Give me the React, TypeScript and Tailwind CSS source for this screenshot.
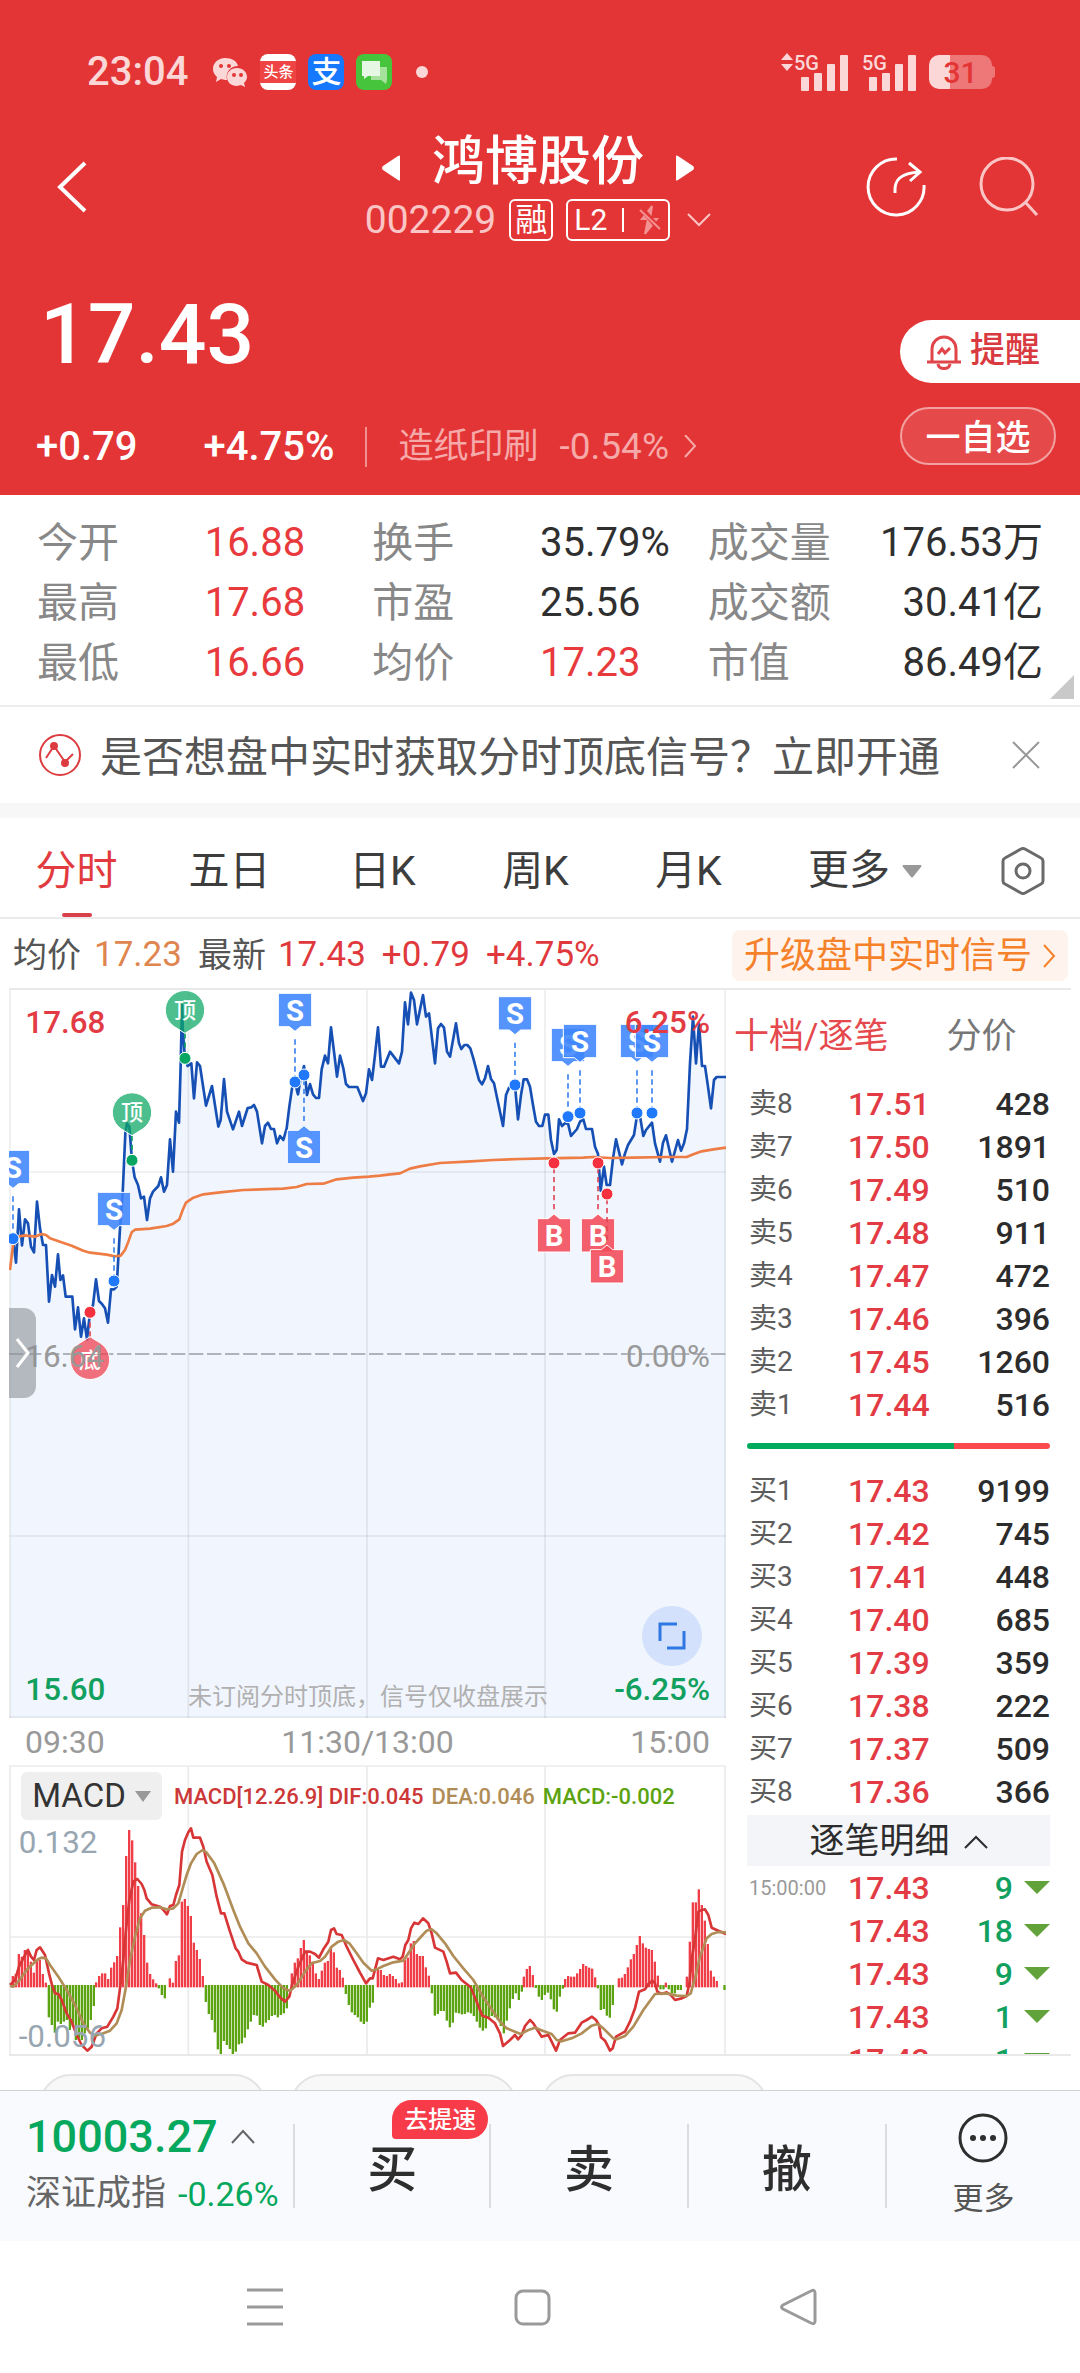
import type { ReactNode } from "react";
import clsx from "clsx";

type Level = { name: string; price: string; volume: string };

const STATS = [
  { label: "今开", value: "16.88", up: true },
  { label: "换手", value: "35.79%" },
  { label: "成交量", value: "176.53万", end: true },
  { label: "最高", value: "17.68", up: true },
  { label: "市盈", value: "25.56" },
  { label: "成交额", value: "30.41亿", end: true },
  { label: "最低", value: "16.66", up: true },
  { label: "均价", value: "17.23", up: true },
  { label: "市值", value: "86.49亿", end: true },
];

const PERIODS = ["分时", "五日", "日K", "周K", "月K"];

const SELLS: Level[] = [
  { name: "卖8", price: "17.51", volume: "428" },
  { name: "卖7", price: "17.50", volume: "1891" },
  { name: "卖6", price: "17.49", volume: "510" },
  { name: "卖5", price: "17.48", volume: "911" },
  { name: "卖4", price: "17.47", volume: "472" },
  { name: "卖3", price: "17.46", volume: "396" },
  { name: "卖2", price: "17.45", volume: "1260" },
  { name: "卖1", price: "17.44", volume: "516" },
];

const BUYS: Level[] = [
  { name: "买1", price: "17.43", volume: "9199" },
  { name: "买2", price: "17.42", volume: "745" },
  { name: "买3", price: "17.41", volume: "448" },
  { name: "买4", price: "17.40", volume: "685" },
  { name: "买5", price: "17.39", volume: "359" },
  { name: "买6", price: "17.38", volume: "222" },
  { name: "买7", price: "17.37", volume: "509" },
  { name: "买8", price: "17.36", volume: "366" },
];

const TRADES = [
  { time: "15:00:00", price: "17.43", volume: "9" },
  { time: "", price: "17.43", volume: "18" },
  { time: "", price: "17.43", volume: "9" },
  { time: "", price: "17.43", volume: "1" },
  { time: "", price: "17.43", volume: "1" },
];

// chart canvases are drawn at 3 units per css pixel
const PRICE_LINE =
  "30,770 39,776 48,848 57,688 66,796 75,718 84,730 93,800 102,817 111,665 120,745 129,795 138,795 147,965 156,885 165,920 174,823 181,900 189,886 197,950 217,950 225,1048 234,982 243,1070 252,1015 261,1078 270,997 279,975 288,898 297,963 306,972 315,985 324,1028 333,928 342,928 350,920 360,745 368,640 376,460 381,430 388,440 396,541 404,592 414,615 423,655 432,650 441,720 450,655 459,635 475,618 483,592 492,635 501,615 510,478 519,575 528,395 537,428 542,255 546,75 549,160 555,235 563,258 574,250 582,355 591,247 600,258 618,377 636,318 655,440 662,420 672,297 681,395 699,448 717,395 726,438 743,384 754,382 762,375 771,395 786,490 795,438 804,428 813,447 822,447 831,490 840,468 850,480 860,445 868,380 876,325 884,306 894,343 903,290 912,258 921,345 930,312 939,343 948,354 957,354 965,268 975,227 984,250 993,142 1002,215 1011,290 1020,227 1030,265 1038,312 1047,321 1072,321 1089,363 1098,340 1107,268 1116,300 1125,225 1134,142 1143,260 1152,260 1170,215 1197,250 1206,215 1215,67 1224,133 1233,38 1242,60 1251,133 1269,45 1278,110 1287,100 1305,250 1314,145 1323,132 1332,143 1341,215 1350,230 1368,130 1377,190 1384,207 1393,195 1402,195 1411,205 1420,235 1437,300 1446,313 1455,295 1464,258 1473,297 1482,310 1509,438 1518,345 1527,323 1545,316 1554,418 1563,345 1571,298 1581,298 1590,320 1599,375 1608,425 1617,438 1627,438 1635,404 1645,404 1653,480 1662,522 1670,510 1677,418 1686,438 1695,430 1704,430 1713,468 1731,447 1740,425 1750,418 1758,447 1776,447 1785,500 1794,522 1802,632 1812,560 1820,615 1830,615 1839,535 1848,478 1866,553 1875,520 1884,495 1902,465 1912,400 1921,415 1930,468 1938,450 1956,428 1965,490 1980,545 1989,488 1998,466 2016,545 2034,480 2043,512 2052,490 2061,447 2070,250 2079,110 2088,250 2097,130 2106,258 2115,258 2124,320 2133,385 2142,300 2150,291 2178,291";

const AVERAGE_LINE =
  "30,870 39,795 55,770 75,766 105,770 125,762 138,765 150,775 180,785 215,797 250,812 270,818 320,824 345,829 362,827 375,810 385,785 395,757 405,749 450,746 500,738 520,731 538,718 548,690 558,668 580,653 610,643 660,637 730,630 850,626 890,621 920,612 970,611 1010,598 1060,593 1107,590 1140,587 1170,583 1200,580 1230,566 1260,559 1320,549 1400,545 1480,540 1560,537 1640,535 1750,533 1780,531 1830,534 1900,533 2000,531 2060,531 2080,523 2105,514 2140,508 2178,503";

const DIF_LINE =
  "30,1215 45,1200 57,1160 75,1125 84,1110 93,1130 102,1140 110,1110 120,1102 135,1125 147,1180 156,1215 165,1240 175,1242 185,1260 200,1300 215,1325 230,1365 245,1395 262,1412 275,1400 290,1360 305,1345 322,1340 340,1310 352,1285 362,1210 370,1140 378,1050 388,960 400,905 412,897 425,912 433,930 440,955 455,973 480,980 492,992 501,1003 510,978 520,975 528,945 538,915 546,815 555,780 565,757 573,745 580,773 600,773 610,800 620,845 637,885 650,950 663,1000 673,1000 690,1055 707,1105 715,1115 725,1138 740,1148 770,1155 785,1205 805,1215 825,1232 840,1252 855,1265 868,1250 876,1215 895,1160 915,1115 930,1115 945,1122 957,1133 970,1108 985,1085 993,1050 1002,1045 1010,1062 1025,1065 1040,1100 1060,1140 1080,1178 1098,1210 1110,1195 1118,1195 1134,1135 1150,1140 1180,1130 1200,1138 1208,1130 1216,1095 1225,1080 1233,1045 1243,1028 1255,1032 1269,1015 1285,1030 1295,1060 1305,1103 1330,1115 1340,1145 1350,1180 1368,1178 1385,1200 1412,1222 1428,1260 1447,1307 1465,1313 1485,1330 1500,1360 1509,1398 1530,1380 1545,1365 1554,1378 1565,1365 1575,1338 1590,1320 1600,1330 1612,1350 1625,1370 1645,1365 1655,1385 1668,1412 1680,1380 1705,1360 1725,1358 1745,1328 1760,1320 1776,1310 1788,1320 1797,1335 1803,1372 1815,1382 1830,1412 1838,1405 1848,1370 1875,1355 1890,1325 1905,1285 1917,1235 1935,1228 1945,1212 1957,1202 1965,1210 1972,1235 1985,1242 2000,1237 2012,1245 2025,1260 2045,1255 2060,1248 2068,1210 2076,1130 2085,1080 2095,995 2105,990 2115,988 2125,1005 2135,1043 2155,1052 2178,1062";

const DEA_LINE =
  "30,1218 40,1220 55,1205 80,1170 95,1155 115,1137 125,1133 138,1135 150,1155 175,1190 200,1230 225,1275 250,1330 270,1358 285,1367 310,1360 330,1352 350,1330 365,1290 378,1220 390,1140 405,1070 420,1015 435,992 455,983 480,982 500,988 520,985 535,970 548,925 560,885 573,850 590,822 608,810 620,818 643,850 670,910 700,990 720,1040 745,1090 770,1120 795,1160 825,1198 850,1225 870,1233 890,1215 915,1175 935,1150 960,1143 975,1130 995,1100 1015,1085 1032,1080 1048,1090 1070,1120 1090,1148 1115,1172 1130,1168 1150,1158 1180,1147 1210,1142 1225,1120 1245,1090 1265,1068 1280,1052 1295,1048 1310,1060 1335,1090 1360,1128 1390,1165 1420,1200 1450,1252 1480,1295 1500,1325 1520,1345 1545,1355 1562,1362 1585,1350 1605,1343 1630,1353 1655,1362 1670,1380 1685,1384 1715,1375 1745,1360 1775,1337 1793,1332 1810,1345 1840,1375 1850,1378 1875,1368 1900,1340 1930,1290 1965,1242 2000,1240 2030,1247 2060,1248 2072,1240 2085,1195 2100,1130 2120,1075 2135,1062 2155,1056 2178,1057";

// runs of histogram bars: x of the first bar, then the tip of each bar
const MACD_RUNS: { x: number; tips: number[] }[] = [
  { x: 39, tips: [1188, 1182, 1122, 1130, 1110, 1108, 1145, 1178, 1140, 1140, 1182, 1208] },
  { x: 147, tips: [1312, 1335, 1358, 1325, 1332, 1325, 1320, 1350, 1340, 1380, 1375, 1380, 1360, 1345, 1320, 1278] },
  { x: 289, tips: [1207, 1188, 1180, 1180, 1197, 1163, 1147, 1128, 1042, 975, 828, 750, 781, 847, 918, 1000, 1065, 1148, 1182, 1198, 1210] },
  { x: 477, tips: [1225, 1245, 1255] },
  { x: 510, tips: [1195, 1208, 1143, 1126, 965, 957, 978, 1008, 1088, 1110, 1137, 1188] },
  { x: 618, tips: [1266, 1302, 1320, 1357, 1408, 1422, 1383, 1395, 1407, 1422, 1415, 1393, 1390, 1373, 1348, 1325, 1305, 1307, 1335, 1340, 1328, 1320, 1308, 1305, 1312, 1305, 1300, 1285] },
  { x: 876, tips: [1180, 1148, 1135, 1104, 1080, 1115, 1126, 1145, 1180, 1197, 1172, 1148, 1143, 1100, 1117, 1163, 1170, 1193] },
  { x: 1038, tips: [1242, 1275, 1297, 1305, 1312, 1325, 1332, 1325, 1283, 1268] },
  { x: 1134, tips: [1165, 1170, 1185, 1188, 1182, 1188, 1197, 1210, 1207, 1140, 1133, 1090, 1083, 1122, 1128, 1128, 1162, 1187] },
  { x: 1296, tips: [1240, 1307, 1302, 1293, 1293, 1322, 1342, 1328, 1298, 1300, 1303, 1302, 1297, 1300, 1308, 1325, 1343, 1352, 1345, 1312, 1308, 1312, 1320, 1338, 1360, 1322, 1285, 1257, 1240, 1260, 1235] },
  { x: 1572, tips: [1190, 1167, 1158, 1185] },
  { x: 1608, tips: [1224, 1250, 1260, 1245, 1238, 1258, 1288, 1295, 1250, 1226] },
  { x: 1696, tips: [1197, 1188, 1190, 1190, 1180, 1167, 1152, 1158, 1163, 1166, 1192] },
  { x: 1794, tips: [1225, 1290, 1287, 1307, 1313, 1275] },
  { x: 1857, tips: [1195, 1193, 1182, 1162, 1138, 1122, 1095, 1068, 1090, 1103, 1107, 1110, 1145, 1187] },
  { x: 1982, tips: [1228, 1228] },
  { x: 1998, tips: [1208] },
  { x: 2007, tips: [1228, 1240, 1240, 1230, 1230] },
  { x: 2061, tips: [1190, 1085, 967, 967, 928, 975, 1022, 1092, 1172, 1190, 1203] },
  { x: 2174, tips: [1230] },
];

// box = top edge of the flag, dot = point on the price line
const FLAGS = [
  { kind: "S", x: 39, box: 511, dot: 776 },
  { kind: "S", x: 342, box: 637, dot: 903 },
  { kind: "S", x: 885, box: 40, dot: 306 },
  { kind: "S", x: 912, box: 451, dot: 285 },
  { kind: "S", x: 1545, box: 50, dot: 315 },
  { kind: "S", x: 1704, box: 145, dot: 410 },
  { kind: "S", x: 1740, box: 133, dot: 399 },
  { kind: "S", x: 1911, box: 133, dot: 399 },
  { kind: "S", x: 1956, box: 133, dot: 399 },
  { kind: "B", x: 1662, box: 716, dot: 549 },
  { kind: "B", x: 1794, box: 716, dot: 549 },
  { kind: "B", x: 1821, box: 809, dot: 642 },
];

function Flag({ kind, x, box, dot }: { kind: string; x: number; box: number; dot: number }) {
  const sell = kind === "S";
  const above = box < dot;
  const line = sell ? "#3f85ee" : "#e0485a";
  const near = above ? box + 100 : box;
  const tip = above ? near + 14 : near - 14;
  return (
    <g>
      <line x1={x} x2={x} y1={above ? tip + 24 : tip - 14} y2={above ? dot - 14 : dot + 14} stroke={line} strokeWidth="5" strokeDasharray="16 11" />
      <circle cx={x} cy={dot} r="18" fill={sell ? "#2079fb" : "#f5313f"} stroke="#fff" strokeWidth="3" />
      <g fill={sell ? "#3f85fd" : "#f24a58"} fillOpacity="0.88" stroke="#fff" strokeWidth="3">
        {above ? (
          <path d={`M${x - 50} ${box}h100v100h-33L${x} ${tip}L${x - 17} ${near}h-33z`} />
        ) : (
          <path d={`M${x - 50} ${box}h33L${x} ${tip}L${x + 17} ${near}h33v100h-100z`} />
        )}
      </g>
      <text x={x} y={box + 82} textAnchor="middle" fontSize="88" fontWeight="700" fill="#fff">
        {kind}
      </text>
    </g>
  );
}

function Pin({ x, y, dot, text }: { x: number; y: number; dot: number; text: string }) {
  const top = y < dot;
  const tip = top ? y + 70 : y - 70;
  const edge = top ? y + 50 : y - 50;
  return (
    <g>
      <line x1={x} x2={x} y1={tip} y2={dot} stroke={top ? "#0d9c62" : "#e0485a"} strokeWidth="5" strokeDasharray="16 11" />
      <circle cx={x} cy={dot} r="18" fill={top ? "#06a561" : "#f5313f"} stroke="#fff" strokeWidth="3" />
      <path
        d={`M${x - 32} ${edge}A59 59 0 1 ${top ? 1 : 0} ${x + 32} ${edge}L${x} ${tip}z`}
        fill={top ? "#0fa866" : "#f04050"}
        fillOpacity="0.74"
        stroke="#fff"
        strokeWidth="3"
      />
      <text x={x} y={y + 24} textAnchor="middle" fontSize="66" fontWeight="500" fill="#fff">
        {text}
      </text>
    </g>
  );
}

function Chevron({ d, className }: { d: string; className: string }) {
  return (
    <svg viewBox="0 0 24 24" fill="none" stroke="currentColor" strokeWidth="2" className={className}>
      <path d={d} />
    </svg>
  );
}

function Signal({ arrows }: { arrows?: boolean }) {
  return (
    <svg viewBox="0 0 68 38" className="h-[38px] w-[68px] overflow-visible" fill="#fbd7d7">
      {arrows && <path d="M0 7L6 0L12 7zM0 11L6 18L12 11z" />}
      <text x="13" y="17" fontSize="20" fontWeight="500">
        5G
      </text>
      <rect x="20" y="24" width="8" height="14" rx="1" />
      <rect x="33" y="20" width="8" height="18" rx="1" />
      <rect x="46" y="11" width="8" height="27" rx="1" />
      <rect x="59" y="2" width="8" height="36" rx="1" />
    </svg>
  );
}

function StatusBar() {
  return (
    <div className="flex h-9 items-center justify-between pl-[87px] pr-[85px] text-[#fbd7d7]">
      <div className="flex items-center gap-3">
        <span className="mr-3 text-[40px] font-medium leading-9">23:04</span>
        <svg viewBox="0 0 36 36" className="size-9" fill="#fbd7d7">
          <path d="M13 4C6 4 1 9 1 15c0 4 2 6 4 8l-1 5 5-3 4 1h2c-2-8 4-14 11-14C25 7 20 4 13 4z" />
          <path d="M25 14c-6 0-10 4-10 9s4 9 10 9l4-1 4 2-1-4c2-2 3-4 3-6 0-5-4-9-10-9z" />
          <g fill="#e33535">
            <circle cx="9" cy="12" r="2" />
            <circle cx="17" cy="12" r="2" />
            <circle cx="22" cy="21" r="2" />
            <circle cx="29" cy="21" r="2" />
          </g>
        </svg>
        <span className="flex size-9 items-center overflow-hidden rounded-lg bg-white">
          <span className="w-full bg-[#ef4444] text-center text-[15px] font-medium leading-[22px] text-white">头条</span>
        </span>
        <span className="flex size-9 items-center justify-center rounded-lg bg-[#1677ff] text-[30px] font-medium leading-9 text-white">支</span>
        <svg viewBox="0 0 36 36" className="size-9">
          <rect width="36" height="36" rx="8" fill="#46c53c" />
          <path d="M15 13h16v13l-1 4-5-4H15z" fill="#a5e39c" />
          <path d="M6 7h18v15H12l-4 3v-3H6z" fill="#e6f8e4" />
        </svg>
        <span className="ml-3 size-3 rounded-full bg-[#fbd7d7]" />
      </div>
      <div className="flex items-center">
        <Signal arrows />
        <Signal />
        <span className="ml-3 flex h-[34px] w-[63px] items-center justify-center rounded-[10px] bg-linear-to-r from-[#fbd7d7] from-33% to-[#ee7777] to-33% text-[30px] font-medium text-[#e33535]">
          31
        </span>
        <span className="h-3 w-[3px] rounded-r bg-[#ee7777]" />
      </div>
    </div>
  );
}

function TitleBar() {
  return (
    <div className="mt-11 grid grid-cols-[1fr_auto_1fr] items-center pl-9 pr-10">
      <button aria-label="返回" className="ml-4 w-10">
        <svg viewBox="0 0 40 56" className="h-14 w-10" fill="none" stroke="#fff" strokeWidth="4">
          <path d="M33 3L8 27L33 51" />
        </svg>
      </button>
      <div className="flex flex-col items-center gap-[9px]">
        <div className="flex h-14 items-center gap-[31px]">
          <button aria-label="上一只">
            <svg viewBox="0 0 20 28" className="mt-3 h-7 w-5" fill="#fff">
              <path d="M19 2v24q0 1-2 0L2 16q-2-2 0-4L17 2q2-1 2 0z" />
            </svg>
          </button>
          <h1 className="text-[53px] font-medium leading-[58px]">鸿博股份</h1>
          <button aria-label="下一只">
            <svg viewBox="0 0 20 28" className="mt-3 h-7 w-5" fill="#fff">
              <path d="M1 2v24q0 1 2 0L18 16q2-2 0-4L3 2Q1 1 1 2z" />
            </svg>
          </button>
        </div>
        <div className="flex h-[42px] items-center gap-[13px]">
          <span className="text-[39px] leading-[42px] text-[#fbc5c5]">002229</span>
          <span className="flex h-[42px] w-11 items-center justify-center rounded-[6px] border-2 text-[32px] leading-8">融</span>
          <span className="flex h-[42px] w-[104px] items-center justify-between rounded-[6px] border-2 px-[6px] text-[30px] leading-8">
            L2
            <span className="h-6 w-[2px] bg-white" />
            <svg viewBox="0 0 24 30" className="h-[30px] w-6">
              <path d="M14 1L4 14h6L7 29l12-15h-7z" fill="#f29292" stroke="#f29292" strokeWidth="2" />
              <path d="M3 3l20 23" stroke="#e33536" strokeWidth="5" />
              <path d="M2 5l20 19" stroke="#f29292" strokeWidth="2" />
            </svg>
          </span>
          <Chevron d="M1 6L12 17L23 6" className="ml-1 size-6 text-[#fbc5c5]" />
        </div>
      </div>
      <div className="flex items-center justify-end gap-[50px]">
        <button aria-label="分享">
          <svg viewBox="0 0 60 62" className="h-[62px] w-[60px]" fill="none" stroke="#fff" strokeWidth="3">
            <path d="M31 2A28 28 0 1 0 58 28" />
            <path d="M29 36C28 23 34 16 54 15M43 6L54 15L44 24" />
          </svg>
        </button>
        <button aria-label="搜索">
          <svg viewBox="0 0 64 62" className="h-[62px] w-16" fill="none" stroke="#fbc5c5" strokeWidth="3">
            <circle cx="31" cy="27" r="26" />
            <path d="M50 46L61 58" />
          </svg>
        </button>
      </div>
    </div>
  );
}

function PriceHeader() {
  return (
    <div className="flex justify-between">
      <div className="pb-7 pl-9 pt-[52px]">
        <div className="pl-1 text-[84px] font-medium leading-[84px]">17.43</div>
        <div className="mt-[50px] flex h-10 items-center">
          <span className="text-[40px] font-medium">+0.79</span>
          <span className="ml-[66px] text-[40px] font-medium">+4.75%</span>
          <span className="ml-[30px] mr-[32px] h-10 w-[2px] bg-[#f09090]" />
          <a href="#industry" className="flex items-center text-[#f6a9a9]">
            <span className="text-[35px]">造纸印刷</span>
            <span className="ml-[21px] text-[37px]">-0.54%</span>
            <Chevron d="M8 0L18 11L8 22" className="ml-2 size-6" />
          </a>
        </div>
      </div>
      <div className="flex flex-col gap-6 pt-[79px]">
        <button className="flex h-[63px] w-[180px] items-center rounded-l-full bg-white pl-[26px] text-[35px] font-medium text-[#d83a3f]">
          <svg viewBox="0 0 36 36" className="mr-2 size-9" fill="none" stroke="#e0454a" strokeWidth="3">
            <path d="M6 28V15a12 12 0 0 1 24 0v13M1 28h34" />
            <path d="M12 30c1 6 11 6 12 0M12 20l4-5 3 4 5-5" />
          </svg>
          提醒
        </button>
        <button className="h-[58px] w-[156px] rounded-full border-2 border-[#f2a0a0] bg-white/10 pt-1 text-[35px] font-medium leading-none">一自选</button>
      </div>
    </div>
  );
}

function StatsGrid() {
  return (
    <dl className="relative grid grid-cols-3 border-b-2 border-[#ededed] px-[37px] pb-3 pt-[18px] text-[40px] leading-[60px]">
      {STATS.map((stat) => (
        <div key={stat.label} className={clsx("flex", stat.end && "justify-between")}>
          <dt className={clsx("text-[41px] text-[#888]", !stat.end && "w-1/2")}>{stat.label}</dt>
          <dd className={stat.up ? "text-[#e8393c]" : "text-[#2f2f2f]"}>{stat.value}</dd>
        </div>
      ))}
      <svg viewBox="0 0 24 24" className="absolute bottom-[6px] right-[6px] size-6" fill="#c9c9c9">
        <path d="M24 0v24H0z" />
      </svg>
    </dl>
  );
}

function Notice() {
  return (
    <div className="flex h-24 items-center pl-[38px] pr-[38px] text-[42px] text-[#555]">
      <svg viewBox="0 0 44 44" className="mr-[18px] size-11 shrink-0" fill="none" stroke="#dc3c40" strokeWidth="2">
        <circle cx="22" cy="22" r="20" />
        <path d="M8 25L16 13L27 29L35 21" />
        <circle cx="16" cy="13" r="3" fill="#dc3c40" />
        <circle cx="27" cy="30" r="3" fill="#dc3c40" />
      </svg>
      <p className="flex-1 whitespace-nowrap pt-1">是否想盘中实时获取分时顶底信号？立即开通</p>
      <button aria-label="关闭">
        <svg viewBox="0 0 32 32" className="size-8" fill="none" stroke="#999" strokeWidth="2">
          <path d="M3 3l26 26M29 3L3 29" />
        </svg>
      </button>
    </div>
  );
}

function PeriodTabs() {
  return (
    <nav className="grid h-[101px] grid-cols-[repeat(5,153fr)_200fr_115fr] border-b-2 border-[#ebebeb] text-[41px] text-[#3d3d3d]">
      {PERIODS.map((period, index) => (
        <button key={period} className={clsx("flex flex-col items-center", index === 0 && "text-[#e23b3f]")}>
          <span className="h-[95px] leading-[106px]">{period}</span>
          {index === 0 && <span className="h-1 w-[30px] rounded-sm bg-[#d8404a]" />}
        </button>
      ))}
      <button className="flex h-[106px] items-center justify-center gap-3">
        更多
        <svg viewBox="0 0 20 13" className="h-[13px] w-5" fill="#999">
          <path d="M1 0h18q1 1 0 2l-8 10q-1 1-2 0L1 2Q0 1 1 0z" />
        </svg>
      </button>
      <button aria-label="设置" className="flex items-center justify-center">
        <svg viewBox="0 0 44 48" className="h-12 w-11" fill="none" stroke="#6a6a6a" strokeWidth="3">
          <path d="M20 2q2-1 4 0l16 9q2 1 2 3v20q0 2-2 3l-16 9q-2 1-4 0L4 37q-2-1-2-3V14q0-2 2-3z" />
          <circle cx="22" cy="24" r="7" />
        </svg>
      </button>
    </nav>
  );
}

function QuoteLine() {
  return (
    <div className="flex h-[69px] items-center justify-between pl-[13px] pr-3 pt-1 text-[35px]">
      <div className="flex items-center text-[#e0393d]">
        <span className="text-[34px] text-[#555]">均价</span>
        <span className="ml-[13px] text-[#df8650]">17.23</span>
        <span className="ml-4 text-[34px] text-[#555]">最新</span>
        <span className="ml-3">17.43</span>
        <span className="ml-4">+0.79</span>
        <span className="ml-4">+4.75%</span>
      </div>
      <a href="#upgrade" className="flex h-[51px] items-center rounded-lg bg-[#fef4ed] pl-3 pr-2 text-[36px] text-[#f5822b]">
        升级盘中实时信号
        <Chevron d="M8 1L18 12L8 23" className="ml-1 size-6" />
      </a>
    </div>
  );
}

function PriceChart() {
  return (
    <div className="relative">
      <svg viewBox="27 30 2151 2184" className="block w-full">
        <polygon points={`30,2214 ${PRICE_LINE} 2178,2214`} fill="#f0f5fe" />
        <g stroke="#000" strokeOpacity="0.07" strokeWidth="5">
          <path d="M30 30V2214M565 30V2214M1101 30V2214M1635 30V2214M2175 30V2214" />
          <path d="M27 576H2178M27 1668H2178M27 2211H2178" />
        </g>
        <line x1="27" x2="2178" y1="1122" y2="1122" stroke="#999da6" strokeWidth="5" strokeDasharray="43 11" />
        <polyline points={PRICE_LINE} fill="none" stroke="#1650b5" strokeWidth="8" strokeLinejoin="round" />
        <polyline points={AVERAGE_LINE} fill="none" stroke="#ee7c45" strokeWidth="8" strokeLinejoin="round" />
        {FLAGS.map((flag) => (
          <Flag key={flag.x} {...flag} />
        ))}
        <Pin x={555} y={90} dot={235} text="顶" />
        <Pin x={396} y={397} dot={541} text="顶" />
        <Pin x={270} y={1140} dot={997} text="底" />
        <g fontSize="94">
          <g fontWeight="500">
            <text x="76" y="158" fill="#e23b44">17.68</text>
            <text x="2130" y="158" textAnchor="end" fill="#e23b44">6.25%</text>
            <text x="76" y="2160" fill="#12a05f">15.60</text>
            <text x="2130" y="2160" textAnchor="end" fill="#12a05f">-6.25%</text>
          </g>
          <text x="76" y="1162" fill="#999">16.64</text>
          <text x="2130" y="1162" textAnchor="end" fill="#999">0.00%</text>
        </g>
        <text x="564" y="2174" fontSize="72" fill="#b0b0b0">
          未订阅分时顶底，信号仅收盘展示
        </text>
      </svg>
      <button aria-label="展开" className="absolute left-0 top-[318px] flex h-[90px] w-[27px] items-center rounded-r-xl bg-[#8c8f94]/60 pl-1">
        <svg viewBox="0 0 18 32" className="h-8 w-[18px]" fill="none" stroke="#fff" strokeWidth="3">
          <path d="M4 2L15 16L4 30" />
        </svg>
      </button>
      <button aria-label="全屏" className="absolute bottom-[52px] right-6 flex size-[60px] items-center justify-center rounded-full bg-[#d3e1fd]">
        <svg viewBox="0 0 28 28" className="size-7" fill="none" stroke="#2f78e2" strokeWidth="3">
          <path d="M2 19V2h17M26 9v17H9" />
        </svg>
      </button>
    </div>
  );
}

function MacdChart() {
  return (
    <div className="relative">
      <svg viewBox="27 555 2151 867" className="block w-full">
        <path d="M27 558H2178M27 1071H2178M30 558V1422M565 558V1422M1101 558V1422M1635 558V1422M2175 558V1422" stroke="#ebebeb" strokeWidth="5" />
        {MACD_RUNS.map((run) =>
          run.tips.map((tip, i) => {
            const up = tip < 1218;
            return <rect key={run.x + i} x={run.x + i * 9 - 4} y={up ? tip : 1215} width="7" height={up ? 1222 - tip : tip - 1215} fill={up ? "#f03e48" : "#5ba310"} />;
          })
        )}
        <polyline points={DIF_LINE} fill="none" stroke="#d83636" strokeWidth="8" strokeLinejoin="round" />
        <polyline points={DEA_LINE} fill="none" stroke="#b08d57" strokeWidth="8" strokeLinejoin="round" />
        <g fontSize="94" fill="#97a6b1">
          <text x="56" y="818">0.132</text>
          <text x="56" y="1402">-0.056</text>
        </g>
      </svg>
      <div className="absolute inset-x-0 top-[7px] flex items-center whitespace-nowrap pl-3 text-[22px] font-medium">
        <button className="flex h-12 w-[141px] items-center justify-center gap-[9px] rounded-md bg-[#efefef] text-[33px] font-normal text-[#333]">
          MACD
          <svg viewBox="0 0 16 11" className="h-[11px] w-4" fill="#999">
            <path d="M0 0h16L8 11z" />
          </svg>
        </button>
        <span className="ml-3 text-[#cc3838]">MACD[12.26.9] DIF:0.045</span>
        <span className="ml-2 text-[#b08d57]">DEA:0.046</span>
        <span className="ml-2 text-[#5ba310]">MACD:-0.002</span>
      </div>
    </div>
  );
}

function Levels({ levels, caption }: { levels: Level[]; caption: string }) {
  return (
    <table className="w-full table-fixed">
      <caption className="sr-only">{caption}</caption>
      <tbody>
        {levels.map((level) => (
          <tr key={level.name} className="h-[43px] text-[32px] font-medium leading-[42px]">
            <td className="w-[33%] p-0 pl-[2px] text-[28px] font-normal text-[#5c5c5c]">{level.name}</td>
            <td className="w-[33%] p-0 text-[#e23b44]">{level.price}</td>
            <td className="p-0 text-right text-[#2c2c2c]">{level.volume}</td>
          </tr>
        ))}
      </tbody>
    </table>
  );
}

function OrderBook() {
  return (
    <div className="h-[1064px] overflow-hidden pr-[21px]">
      <div className="flex h-[92px] items-center pl-2 pt-[2px] text-[35px]">
        <button className="text-[#e5484d]">十档/逐笔</button>
        <button className="ml-[58px] text-[#777]">分价</button>
      </div>
      <div className="pl-[21px]">
        <Levels levels={SELLS} caption="卖盘" />
        <div className="flex h-[43px] items-center pb-1">
          <span className="h-[6px] flex-[207] rounded-l-full bg-[#00a95c]" />
          <span className="h-[6px] flex-[96] rounded-r-full bg-[#fb4a4d]" />
        </div>
        <Levels levels={BUYS} caption="买盘" />
        <button className="mt-[2px] flex h-[51px] w-full items-center justify-center gap-[14px] bg-[#f3f5f9] pt-1 text-[35px] text-[#2c2c2c]">
          逐笔明细
          <Chevron d="M1 17L12 6L23 17" className="size-6" />
        </button>
        <table className="w-full table-fixed">
          <caption className="sr-only">逐笔成交</caption>
          <tbody>
            {TRADES.map((trade, index) => (
              <tr key={index} className="h-[43px] text-[32px] font-medium leading-[42px]">
                <td className="w-[35%] p-0 pl-[2px] text-[20px] font-normal text-[#999]">{trade.time}</td>
                <td className="w-[30%] p-0 text-[#e23b44]">{trade.price}</td>
                <td className="p-0 text-[#12a05f]">
                  <span className="flex items-center justify-end gap-[11px]">
                    {trade.volume}
                    <svg viewBox="0 0 26 13" className="h-[13px] w-[26px]" fill="#62a23b">
                      <path d="M0 0h26L13 13z" />
                    </svg>
                  </span>
                </td>
              </tr>
            ))}
          </tbody>
        </table>
      </div>
    </div>
  );
}

function TradeButton({ children, badge }: { children: ReactNode; badge?: string }) {
  return (
    <button className="relative flex h-[84px] items-center justify-center border-l-2 border-[#dcdcdf] pt-2 text-[50px] font-medium text-[#2e2e2e]">
      {children}
      {badge && (
        <span className="absolute -top-6 left-1/2 flex h-[39px] w-24 items-center justify-center rounded-[20px] rounded-bl-[4px] bg-[#f73b48] text-[24px] text-white">
          {badge}
        </span>
      )}
    </button>
  );
}

function TradeBar() {
  return (
    <footer className="grid h-[151px] grid-cols-[293fr_196fr_197fr_198fr_195fr] items-center border-t border-[#d3d3d6] bg-[#f9fafd]">
      <button className="flex flex-col items-start whitespace-nowrap pl-[26px]">
        <span className="flex items-center gap-[13px] text-[45px] font-medium leading-[56px] text-[#06a85e]">
          10003.27
          <Chevron d="M1 18L12 6L23 18" className="size-6 text-[#666]" />
        </span>
        <span className="flex items-center gap-3 text-[34px] leading-[58px] text-[#06a85e]">
          <span className="text-[35px] text-[#666]">深证成指</span>
          -0.26%
        </span>
      </button>
      <TradeButton badge="去提速">买</TradeButton>
      <TradeButton>卖</TradeButton>
      <TradeButton>撤</TradeButton>
      <button className="flex h-[84px] flex-col items-center justify-center border-l-2 border-[#dcdcdf] text-[31px] text-[#555]">
        <svg viewBox="0 0 50 50" className="size-[50px] shrink-0" fill="#2e2e2e">
          <circle cx="25" cy="25" r="23" fill="none" stroke="#2e2e2e" strokeWidth="3" />
          <circle cx="15" cy="25" r="3" />
          <circle cx="25" cy="25" r="3" />
          <circle cx="35" cy="25" r="3" />
        </svg>
        <span className="mt-4 leading-10">更多</span>
      </button>
    </footer>
  );
}

function SystemNav() {
  const icon = "size-10";
  return (
    <nav className="grid h-[132px] grid-cols-3 place-items-center pl-[131px] pr-[147px]">
      <button aria-label="菜单">
        <svg viewBox="0 0 40 40" className={icon} stroke="#9a9a9a" strokeWidth="3">
          <path d="M2 3h36M2 20h36M2 37h36" />
        </svg>
      </button>
      <button aria-label="主页">
        <svg viewBox="0 0 40 40" className={icon} fill="none" stroke="#9a9a9a" strokeWidth="3">
          <rect x="4" y="4" width="33" height="33" rx="7" />
        </svg>
      </button>
      <button aria-label="后退">
        <svg viewBox="0 0 40 40" className={icon} fill="none" stroke="#9a9a9a" strokeWidth="3">
          <path d="M32 4q4-2 4 2v28q0 4-4 2L4 22q-3-2 0-4z" />
        </svg>
      </button>
    </nav>
  );
}

export default function App() {
  return (
    <div className="w-full overflow-hidden bg-white font-['Roboto','Noto_Sans_CJK_SC',sans-serif]">
      <header className="bg-[#e33536] pt-[54px] text-white">
        <StatusBar />
        <TitleBar />
        <PriceHeader />
      </header>
      <StatsGrid />
      <Notice />
      <div className="h-[15px] bg-[#f7f7f7]" />
      <PeriodTabs />
      <QuoteLine />

      {/* charts on the left, order book on the right */}
      <main className="mx-[9px] grid grid-cols-[717fr_345fr] border-y-2 border-[#e9e9e9]">
        <div className="min-w-0">
          <PriceChart />
          <div className="grid h-[47px] grid-cols-3 items-center px-4 text-[32px] text-[#999]">
            <span>09:30</span>
            <span className="text-center">11:30/13:00</span>
            <span className="text-right">15:00</span>
          </div>
          <MacdChart />
        </div>
        <OrderBook />
      </main>

      <div className="flex h-[34px] gap-6 overflow-hidden pl-[39px] pt-[18px]">
        <span className="h-16 w-[227px] rounded-full border-2 border-[#e4e4e4] bg-[#f8f8f8]" />
        <span className="h-16 w-[227px] rounded-full border-2 border-[#e4e4e4] bg-[#f8f8f8]" />
        <span className="h-16 w-[227px] rounded-full border-2 border-[#e4e4e4] bg-[#f8f8f8]" />
      </div>
      <TradeBar />
      <SystemNav />
    </div>
  );
}
